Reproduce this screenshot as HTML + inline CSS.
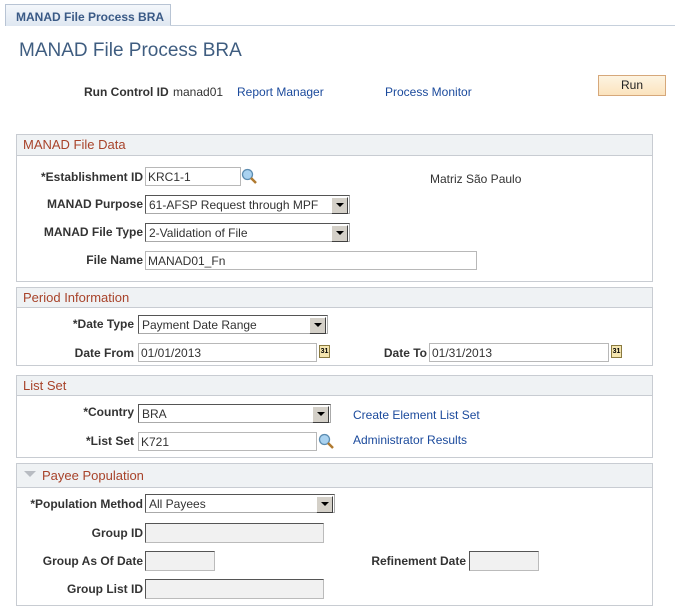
<!DOCTYPE html>
<html><head><meta charset="utf-8"><style>
*{box-sizing:border-box;margin:0;padding:0}
body{width:675px;height:616px;background:#fff;font-family:"Liberation Sans",Arial,sans-serif;font-size:12px;color:#333;position:relative;overflow:hidden}
.a{position:absolute;white-space:nowrap}
.lbl{position:absolute;font-weight:bold;color:#333;text-align:right;white-space:nowrap}
.lnk{position:absolute;color:#1b4a9c;white-space:nowrap}
.in{position:absolute;border:1px solid #b8b8b8;background:#fff;padding-left:2px;line-height:19px;font-size:12px;color:#333;white-space:nowrap}
.sel{position:absolute;border:1px solid #555;border-right-color:#aaa;border-bottom-color:#aaa;background:#fff;padding-left:3px;line-height:19px;color:#333;white-space:nowrap}
.sel:after{content:"";position:absolute;right:1px;top:1px;width:15px;height:15px;background:#d4d0c8;border:1px solid #fff;border-right-color:#404040;border-bottom-color:#404040}
.sel i{position:absolute;right:5px;top:7px;width:0;height:0;border-left:4px solid transparent;border-right:4px solid transparent;border-top:4px solid #000;z-index:2}
.dis{position:absolute;border:1px solid #555;border-right-color:#bbb;border-bottom-color:#bbb;background:#f1f1f1}
.panel{position:absolute;left:16px;width:637px;border:1px solid #c8ccd2;border-top:none}
.ph{position:absolute;left:16px;width:637px;background:#eff2f4;border:1px solid #c8ccd2;color:#a8432a;font-size:13px;padding-left:6px}
.cal{position:absolute;width:11px;height:13px;background:#f5e6b0;border:1px solid #8a7a40;font-size:7px;line-height:11px;text-align:center;color:#000;font-weight:bold}
</style></head><body>
<div class="a" style="left:5px;top:4px;width:166px;height:22px;background:linear-gradient(#f4f7fb,#dfe7f1);border:1px solid #b8c4d4;border-bottom:none;color:#3a5a86;font-weight:bold;font-size:12px;padding:5px 0 0 10px">MANAD File Process BRA</div>
<div class="a" style="left:170px;top:25px;width:505px;height:1px;background:#c6d0dc"></div>
<div class="a" style="left:19px;top:40px;font-size:19px;color:#3f5d80">MANAD File Process BRA</div>
<div class="lbl" style="left:84px;top:85px">Run Control ID</div>
<div class="a" style="left:173px;top:85px">manad01</div>
<div class="lnk" style="left:237px;top:85px">Report Manager</div>
<div class="lnk" style="left:385px;top:85px">Process Monitor</div>
<div class="a" style="left:598px;top:75px;width:68px;height:21px;border:1px solid #d6a87a;background:linear-gradient(#fdf4e2,#fbe3bd);text-align:center;line-height:19px;font-size:12px;color:#222">Run</div>

<div class="ph" style="top:134px;height:22px;line-height:20px">MANAD File Data</div>
<div class="panel" style="top:156px;height:126px"></div>
<div class="lbl" style="right:532px;top:170px">*Establishment ID</div>
<div class="in" style="left:145px;top:167px;width:96px;height:19px">KRC1-1</div>
<svg class="a" style="left:241px;top:168px" width="17" height="17"><circle cx="6.5" cy="6.5" r="5" fill="#a9d2f0" stroke="#5c8cb0" stroke-width="1.3"/><line x1="10" y1="10" x2="15" y2="15" stroke="#b07a30" stroke-width="2.5"/></svg>
<div class="a" style="left:430px;top:172px">Matriz São Paulo</div>
<div class="lbl" style="right:532px;top:197px">MANAD Purpose</div>
<div class="sel" style="left:145px;top:195px;width:205px;height:19px">61-AFSP Request through MPF<i></i></div>
<div class="lbl" style="right:532px;top:225px">MANAD File Type</div>
<div class="sel" style="left:145px;top:223px;width:205px;height:19px">2-Validation of File<i></i></div>
<div class="lbl" style="right:532px;top:253px">File Name</div>
<div class="in" style="left:145px;top:251px;width:332px;height:19px">MANAD01_Fn</div>

<div class="ph" style="top:287px;height:21px;line-height:19px">Period Information</div>
<div class="panel" style="top:308px;height:58px"></div>
<div class="lbl" style="right:541px;top:317px">*Date Type</div>
<div class="sel" style="left:138px;top:315px;width:190px;height:19px">Payment Date Range<i></i></div>
<div class="lbl" style="right:541px;top:346px">Date From</div>
<div class="in" style="left:138px;top:343px;width:179px;height:19px">01/01/2013</div>
<div class="cal" style="left:319px;top:345px">31</div>
<div class="lbl" style="right:248px;top:346px">Date To</div>
<div class="in" style="left:429px;top:343px;width:180px;height:19px">01/31/2013</div>
<div class="cal" style="left:611px;top:345px">31</div>

<div class="ph" style="top:375px;height:21px;line-height:19px">List Set</div>
<div class="panel" style="top:396px;height:62px"></div>
<div class="lbl" style="right:541px;top:405px">*Country</div>
<div class="sel" style="left:138px;top:404px;width:193px;height:19px">BRA<i></i></div>
<div class="lnk" style="left:353px;top:408px">Create Element List Set</div>
<div class="lbl" style="right:541px;top:434px">*List Set</div>
<div class="in" style="left:138px;top:432px;width:179px;height:19px">K721</div>
<svg class="a" style="left:318px;top:433px" width="17" height="17"><circle cx="6.5" cy="6.5" r="5" fill="#a9d2f0" stroke="#5c8cb0" stroke-width="1.3"/><line x1="10" y1="10" x2="15" y2="15" stroke="#b07a30" stroke-width="2.5"/></svg>
<div class="lnk" style="left:353px;top:433px">Administrator Results</div>

<div class="ph" style="top:463px;height:25px;line-height:24px;padding-left:25px">Payee Population</div>
<div class="a" style="left:24px;top:471px;width:0;height:0;border-left:6px solid transparent;border-right:6px solid transparent;border-top:6px solid #b8bcc2"></div>
<div class="panel" style="top:488px;height:118px"></div>
<div class="lbl" style="right:532px;top:497px">*Population Method</div>
<div class="sel" style="left:145px;top:494px;width:190px;height:19px">All Payees<i></i></div>
<div class="lbl" style="right:532px;top:526px">Group ID</div>
<div class="dis" style="left:145px;top:523px;width:179px;height:20px"></div>
<div class="lbl" style="right:532px;top:554px">Group As Of Date</div>
<div class="dis" style="left:145px;top:551px;width:70px;height:20px"></div>
<div class="lbl" style="right:209px;top:554px">Refinement Date</div>
<div class="dis" style="left:469px;top:551px;width:70px;height:20px"></div>
<div class="lbl" style="right:532px;top:582px">Group List ID</div>
<div class="dis" style="left:145px;top:579px;width:179px;height:20px"></div>
</body></html>
